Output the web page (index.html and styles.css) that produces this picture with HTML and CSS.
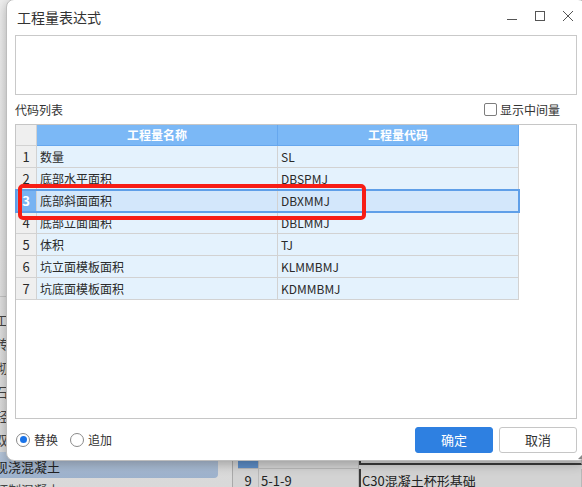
FILE: index.html
```html
<!DOCTYPE html>
<html lang="zh-CN">
<head>
<meta charset="utf-8">
<title>工程量表达式</title>
<link rel="stylesheet" href="styles.css">
</head>
<body>
<div class="app">
  <aside class="side">
    <div class="side-top"></div>
    <ul class="tree">
      <li>工程量</li>
      <li>砖砌体</li>
      <li>砌块</li>
      <li>石材</li>
      <li>轻质墙</li>
      <li>双层墙</li>
      <li class="sel">现浇混凝土</li>
      <li>预制混凝土</li>
    </ul>
  </aside>
  <main class="pane">
    <div class="g-row r8">
      <span class="gn"></span><span class="gc"></span><span class="gm"></span>
    </div>
    <div class="g-row r9">
      <span class="gn">9</span><span class="gc">5-1-9</span><span class="gm">C30混凝土杯形基础</span>
    </div>
  </main>
</div>

<div class="dialog">
  <header class="titlebar">
    <span class="title">工程量表达式</span>
    <div class="controls">
      <span class="ctl"><svg width="12" height="12" viewBox="0 0 12 12"><path d="M1 9.5H11" stroke="#555" stroke-width="1" fill="none"/></svg></span>
      <span class="ctl"><svg width="12" height="12" viewBox="0 0 12 12"><rect x="1.5" y="1.5" width="9" height="9" stroke="#555" stroke-width="1" fill="none"/></svg></span>
      <span class="ctl"><svg width="12" height="12" viewBox="0 0 12 12"><path d="M1 1L11 11M11 1L1 11" stroke="#555" stroke-width="1" fill="none"/></svg></span>
    </div>
  </header>
  <div class="content">
    <div class="expr"></div>
    <div class="listbar">
      <span>代码列表</span>
      <label class="check"><span class="box"></span>显示中间量</label>
    </div>
    <div class="panel">
      <div class="table">
        <div class="row head"><span class="n"></span><span>工程量名称</span><span>工程量代码</span></div>
        <div class="row"><span class="n">1</span><span>数量</span><span>SL</span></div>
        <div class="row"><span class="n">2</span><span>底部水平面积</span><span>DBSPMJ</span></div>
        <div class="row sel"><span class="n">3</span><span>底部斜面面积</span><span>DBXMMJ</span></div>
        <div class="row"><span class="n">4</span><span>底部立面面积</span><span>DBLMMJ</span></div>
        <div class="row"><span class="n">5</span><span>体积</span><span>TJ</span></div>
        <div class="row"><span class="n">6</span><span>坑立面模板面积</span><span>KLMMBMJ</span></div>
        <div class="row"><span class="n">7</span><span>坑底面模板面积</span><span>KDMMBMJ</span></div>
      </div>
      <div class="mark"></div>
    </div>
    <div class="footer">
      <div class="radios">
        <label class="radio"><span class="dot on"></span>替换</label>
        <label class="radio"><span class="dot"></span>追加</label>
      </div>
      <div class="btns">
        <button class="btn primary">确定</button>
        <button class="btn secondary">取消</button>
      </div>
    </div>
  </div>
  <span class="grip"></span>
</div>
</body>
</html>
```

FILE: styles.css
```css
html, body {
  margin: 0;
  padding: 0;
}
body {
  width: 582px;
  height: 487px;
  overflow: hidden;
  position: relative;
  font-family: "Noto Sans CJK SC", "Microsoft YaHei", sans-serif;
  background: #d8d8d8;
}

/* background application */
.app {
  display: grid;
  grid-template-columns: 233px 1fr;
  height: 487px;
}
.side {
  background: linear-gradient(180deg, #eeeeee, #d9d9d9);
  border-right: 1px solid #a9a9a9;
  box-sizing: border-box;
  overflow: hidden;
}
.side-top {
  height: 296px;
  border-bottom: 1px solid #c4c4c4;
}
.tree {
  list-style: none;
  margin: 0;
  padding: 11px 0 0;
}
.tree li {
  height: 24px;
  line-height: 24px;
  font-size: 13px;
  color: #444;
  white-space: nowrap;
  text-indent: -5px;
  width: 218px;
}
.tree li.sel {
  background: linear-gradient(180deg, #b7c7db, #9cb1cc);
  border-radius: 0 4px 4px 0;
  color: #222;
  height: 26px;
  line-height: 30px;
}
.pane {
  background: #d3d3d3;
  padding: 440px 0 0 5px;
  overflow: hidden;
}
.g-row {
  display: grid;
  grid-template-columns: 21px 100px 1fr;
}
.g-row > span {
  box-sizing: border-box;
  border-right: 1px solid #b8b8b8;
  border-bottom: 1px solid #b8b8b8;
  font-size: 13px;
  color: #222;
  white-space: nowrap;
}
.r8 { height: 29px; }
.r8 .gn { background: #5d8dc6; }
.r8 .gm { border-bottom: 2px solid #3a3a3a; height: 25px; }
.r9 { height: 24px; }
.r9 > span { line-height: 23px; }
.gn { text-align: center; }
.gc { padding-left: 2px; }
.gm { border-left: 2px solid #3a3a3a; padding-left: 1px; }

/* dialog */
.dialog {
  position: absolute;
  left: 6px;
  top: -1px;
  width: 580px;
  height: 462px;
  box-sizing: border-box;
  background: #fff;
  border: 1px solid #bdbdbd;
  border-radius: 8px;
  box-shadow: 0 3px 12px rgba(0, 0, 0, 0.28);
  display: flex;
  flex-direction: column;
}
.titlebar {
  height: 35px;
  flex: none;
  display: flex;
  align-items: flex-start;
  justify-content: space-between;
}
.title {
  padding-left: 10px;
  font-size: 14px;
  line-height: 35px;
  color: #333;
}
.controls {
  display: flex;
  padding-right: 3px;
}
.ctl {
  width: 28px;
  height: 35px;
  box-sizing: border-box;
  padding-top: 10px;
  display: flex;
  justify-content: center;
}
.ctl svg { display: block; }
.content {
  flex: 1;
  display: flex;
  flex-direction: column;
  padding: 0 8px;
}
.expr {
  flex: none;
  height: 60px;
  box-sizing: border-box;
  border: 1px solid #c9c9c9;
}
.listbar {
  flex: none;
  height: 29px;
  display: flex;
  align-items: center;
  justify-content: space-between;
  font-size: 12px;
  color: #333;
  padding-right: 17px;
}
.check {
  display: flex;
  align-items: center;
}
.box {
  width: 13px;
  height: 13px;
  box-sizing: border-box;
  border: 1px solid #7d7d7d;
  border-radius: 2px;
  margin-right: 3px;
}
.panel {
  flex: none;
  height: 295px;
  box-sizing: border-box;
  border: 1px solid #c6c6c6;
  position: relative;
}
.table {
  width: 503px;
}
.row {
  display: grid;
  grid-template-columns: 21px 241px 241px;
  height: 22px;
}
.row > span {
  box-sizing: border-box;
  border-right: 1px solid #d2d2d2;
  border-bottom: 1px solid #d2d2d2;
  background: #e4f2fd;
  line-height: 21px;
  font-size: 12px;
  color: #2a2a2a;
  padding-left: 3px;
  white-space: nowrap;
  overflow: hidden;
}
.row > span.n {
  background: #efefef;
  text-align: center;
  padding: 0;
  font-size: 13px;
}
.row.head {
  height: 21px;
}
.row.head > span {
  line-height: 20px;
  background: #7bb8f6;
  border-color: #66a7ee;
  color: #fff;
  font-weight: bold;
  text-align: center;
  padding: 0;
}
.row.head > span.n {
  background: #efefef;
  border-color: #d2d2d2;
}
.row.sel {
  position: relative;
  outline: 2px solid #5f9fe8;
  outline-offset: -1px;
}
.row.sel > span {
  background: #d3e7fb;
}
.row.sel > span.n {
  background: #78b3f2;
  color: #fff;
  font-weight: bold;
}
.mark {
  position: absolute;
  left: 2px;
  top: 59px;
  width: 348px;
  height: 36px;
  box-sizing: border-box;
  border: 4px solid #f71d15;
  border-radius: 5px;
}
.footer {
  flex: 1;
  display: flex;
  align-items: center;
  justify-content: space-between;
  padding-left: 1px;
}
.radios {
  display: flex;
  gap: 12px;
}
.radio {
  display: flex;
  align-items: center;
  font-size: 12px;
  color: #333;
}
.dot {
  width: 14px;
  height: 14px;
  box-sizing: border-box;
  border: 1px solid #8a8a8a;
  border-radius: 50%;
  margin-right: 4px;
  display: flex;
  align-items: center;
  justify-content: center;
}
.dot.on::after {
  content: "";
  width: 7px;
  height: 7px;
  border-radius: 50%;
  background: #1a73e8;
}
.btns {
  display: flex;
  gap: 6px;
}
.btn {
  width: 78px;
  height: 26px;
  box-sizing: border-box;
  border-radius: 3px;
  font-family: inherit;
  font-size: 13px;
  padding: 0;
  display: flex;
  align-items: center;
  justify-content: center;
}
.primary {
  background: #2e80e1;
  border: 1px solid #2e80e1;
  color: #fff;
}
.secondary {
  background: #fff;
  border: 1px solid #c6c6c6;
  color: #333;
}
.grip {
  position: absolute;
  right: 1px;
  bottom: 1px;
  width: 6px;
  height: 6px;
  background: radial-gradient(circle, #888 0.8px, transparent 1.1px) 0 0 / 2px 2px;
  clip-path: polygon(100% 0, 100% 100%, 0 100%);
}
```
